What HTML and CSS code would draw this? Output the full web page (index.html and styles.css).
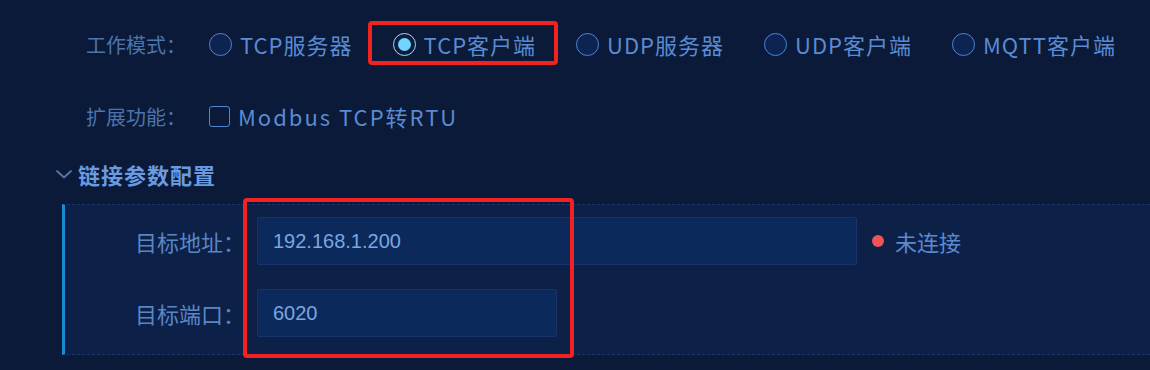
FILE: index.html
```html
<!DOCTYPE html>
<html lang="zh-CN">
<head>
<meta charset="utf-8">
<title>工作模式</title>
<link rel="stylesheet" href="styles.css">
</head>
<body>
<div class="page">
  <div class="opt-row">
    <span class="opt-label">工作模式：</span>
    <div class="radio-group">
      <label class="radio"><span class="circle"></span><span class="rtext">TCP服务器</span></label>
      <label class="radio checked"><span class="circle"><span class="dot"></span></span><span class="rtext">TCP客户端</span><span class="mark mark-radio"></span></label>
      <label class="radio"><span class="circle"></span><span class="rtext">UDP服务器</span></label>
      <label class="radio"><span class="circle"></span><span class="rtext">UDP客户端</span></label>
      <label class="radio"><span class="circle"></span><span class="rtext">MQTT客户端</span></label>
    </div>
  </div>
  <div class="opt-row">
    <span class="opt-label">扩展功能：</span>
    <label class="check"><span class="box"></span><span class="ctext">Modbus TCP转RTU</span></label>
  </div>
  <div class="section-head">
    <svg class="chev" width="18" height="12" viewBox="0 0 18 12"><path d="M2 3 L9 9.5 L16 3" fill="none" stroke="#5577aa" stroke-width="1.8" stroke-linecap="round" stroke-linejoin="round"/></svg>
    <span class="sec-title">链接参数配置</span>
  </div>
  <div class="panel">
    <div class="field-row">
      <span class="f-label">目标地址：</span>
      <div class="input wide">192.168.1.200</div>
      <span class="status"><span class="sdot"></span>未连接</span>
    </div>
    <div class="field-row">
      <span class="f-label">目标端口：</span>
      <div class="input narrow">6020</div>
    </div>
    <span class="mark mark-fields"></span>
  </div>
</div>
</body>
</html>
```

FILE: styles.css
```css
* { box-sizing: border-box; }
html, body { margin: 0; padding: 0; }
body {
  background: #0a1a38;
  font-family: "Noto Sans CJK SC", "Noto Sans", sans-serif;
  width: 1150px;
  height: 370px;
  overflow: hidden;
}
.page {
  padding-top: 20px;
  display: flex;
  flex-direction: column;
}
.opt-row {
  display: flex;
  align-items: center;
  height: 48px;
  padding-left: 86px;
  margin-bottom: 24px;
}
.opt-label {
  width: 123px;
  font-size: 20px;
  color: #4d74ad;
  flex: none;
}
.radio-group {
  display: flex;
  align-items: center;
  gap: 40px;
}
.radio {
  position: relative;
  display: flex;
  align-items: center;
  gap: 8px;
}
.circle {
  width: 23px;
  height: 23px;
  border-radius: 50%;
  border: 1px solid #4f86d0;
  background: #0d2352;
  display: flex;
  align-items: center;
  justify-content: center;
}
.radio.checked .circle {
  border: 1.5px solid #a6dcf7;
  background: #0c1d40;
}
.dot {
  width: 13px;
  height: 13px;
  border-radius: 50%;
  background: #72d5ff;
}
.rtext, .ctext {
  font-size: 22px;
  color: #5a8bd3;
  letter-spacing: 1px;
}
.mark {
  position: absolute;
  border: 4px solid #f32222;
  border-radius: 4px;
  pointer-events: none;
}
.mark-radio {
  top: -7px;
  bottom: -5px;
  left: -25px;
  right: -22px;
}
.check {
  display: flex;
  align-items: center;
  gap: 8px;
}
.box {
  width: 21px;
  height: 21px;
  border: 1.5px solid #4f86d0;
  border-radius: 3px;
}
.ctext { letter-spacing: 2px; }
.section-head {
  display: flex;
  align-items: center;
  height: 30px;
  padding-left: 55px;
  margin-top: -5px;
  margin-bottom: 15px;
  gap: 5px;
}
.sec-title {
  font-size: 22px;
  font-weight: 700;
  color: #6a9be0;
  letter-spacing: 1px;
}
.panel {
  position: relative;
  margin-left: 62px;
  border-left: 3px solid #1a8ad2;
  border-top: 1px dashed #1b3468;
  border-bottom: 1px dashed #1b3468;
  background: #0d2048;
  padding: 12px 0 17px 0;
  display: flex;
  flex-direction: column;
  gap: 24px;
}
.field-row {
  display: flex;
  align-items: center;
}
.f-label {
  width: 180px;
  text-align: right;
  font-size: 22px;
  color: #5a86c6;
  margin-right: 12px;
  flex: none;
}
.input {
  height: 48px;
  border: 1px solid #17336a;
  background: #0c295b;
  border-radius: 2px;
  color: #7aa6e2;
  font-family: "Liberation Sans", Arial, sans-serif;
  font-size: 20px;
  display: flex;
  align-items: center;
  padding-left: 15px;
}
.input.wide { width: 600px; }
.input.narrow { width: 300px; }
.status {
  display: flex;
  align-items: center;
  margin-left: 15px;
  font-size: 22px;
  color: #5a8ad0;
  gap: 11px;
}
.sdot {
  width: 12px;
  height: 12px;
  border-radius: 50%;
  background: #f05454;
}
.mark-fields {
  left: 178px;
  top: -7px;
  width: 331px;
  height: 160px;
}
```
